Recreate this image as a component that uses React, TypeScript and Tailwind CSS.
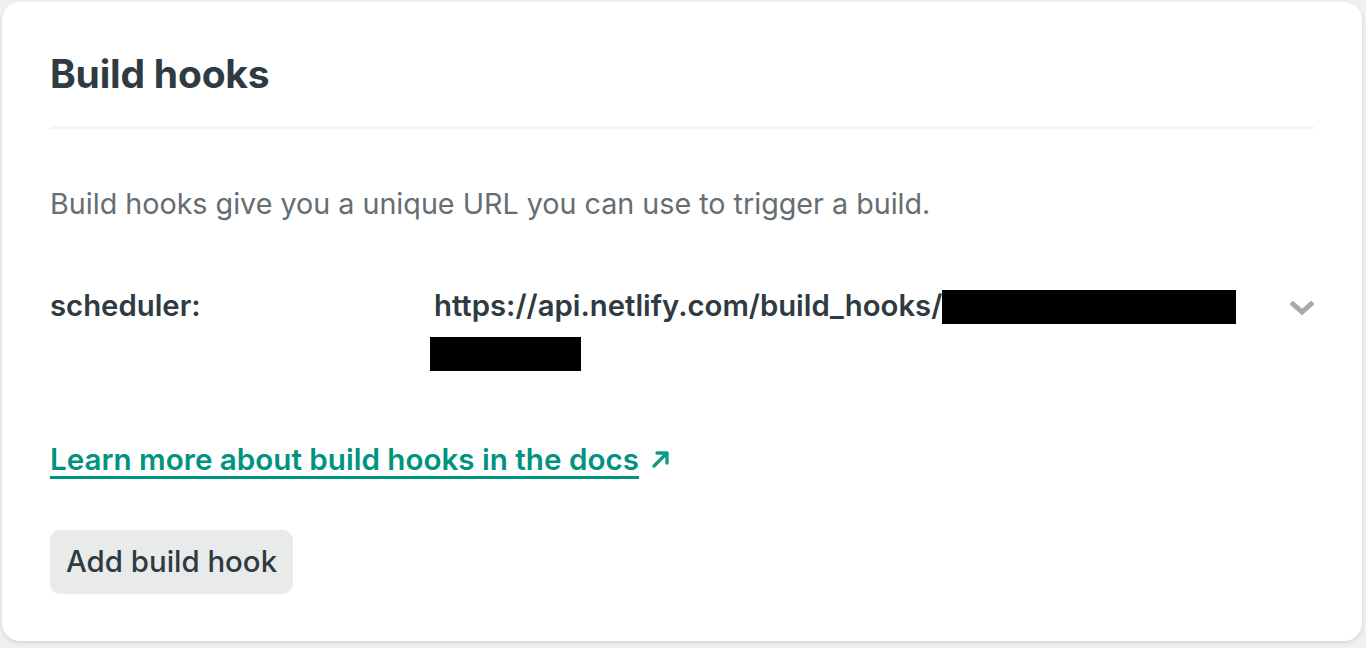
export default function App() {
  return (
    <div className="min-h-[648px] w-full bg-[#eef1f1] pt-[2px] pl-[2px] pr-1 pb-[2px] font-['Inter',sans-serif] text-[#2e3b42]">
      <div className="rounded-[18px] bg-white px-12 pt-[50px] pb-[47px] shadow-[0_2px_4px_rgba(14,30,37,0.12)]">
        <h2 className="text-[39px] font-bold leading-[44px] tracking-[-0.2px]">Build hooks</h2>
        <div className="mt-[30px] h-[3px] bg-[#f4f5f5]" />
        <p className="mt-[55px] text-[28.7px] leading-[40px] text-[#646e73]">
          Build hooks give you a unique URL you can use to trigger a build.
        </p>
        <div className="mt-[58px] flex items-start">
          <div className="w-[384px] shrink-0 text-[29.3px] font-semibold leading-[47px]">scheduler:</div>
          <div className="flex-1 text-[29.3px] font-semibold leading-[47px]">
            <div className="flex h-[47px] items-center">
              <span>https://api.netlify.com/build_hooks/</span>
              <span className="mt-[2px] h-[34px] w-[294px] bg-black" />
            </div>
            <div className="mt-2 -ml-1 h-[34px] w-[151px] bg-black" />
          </div>
          <svg className="mt-[19px] h-[14px] w-6 text-[#a5abae]" viewBox="0 0 24 14" fill="none">
            <path d="M3 3l9 8 9-8" stroke="currentColor" strokeWidth="5" strokeLinecap="square" strokeLinejoin="miter" />
          </svg>
        </div>
        <a
          href="#"
          className="mt-[68px] flex w-fit items-center gap-3 text-[29.6px] font-semibold leading-[40px] text-[#00937f]"
        >
          <span className="underline decoration-[3px] underline-offset-[6px]">Learn more about build hooks in the docs</span>
          <svg className="h-[19px] w-[19px]" viewBox="0 0 19 19" fill="none">
            <path d="M3 16L16 3M6 3h10v10" stroke="#0e9a86" strokeWidth="3.4" strokeLinecap="round" strokeLinejoin="round" />
          </svg>
        </a>
        <div className="mt-[51px]">
          <button className="rounded-[10px] bg-[#e9ebeb] px-4 py-3 text-[29.4px] font-medium leading-[40px] text-[#2e3b42]">
            Add build hook
          </button>
        </div>
      </div>
    </div>
  );
}
